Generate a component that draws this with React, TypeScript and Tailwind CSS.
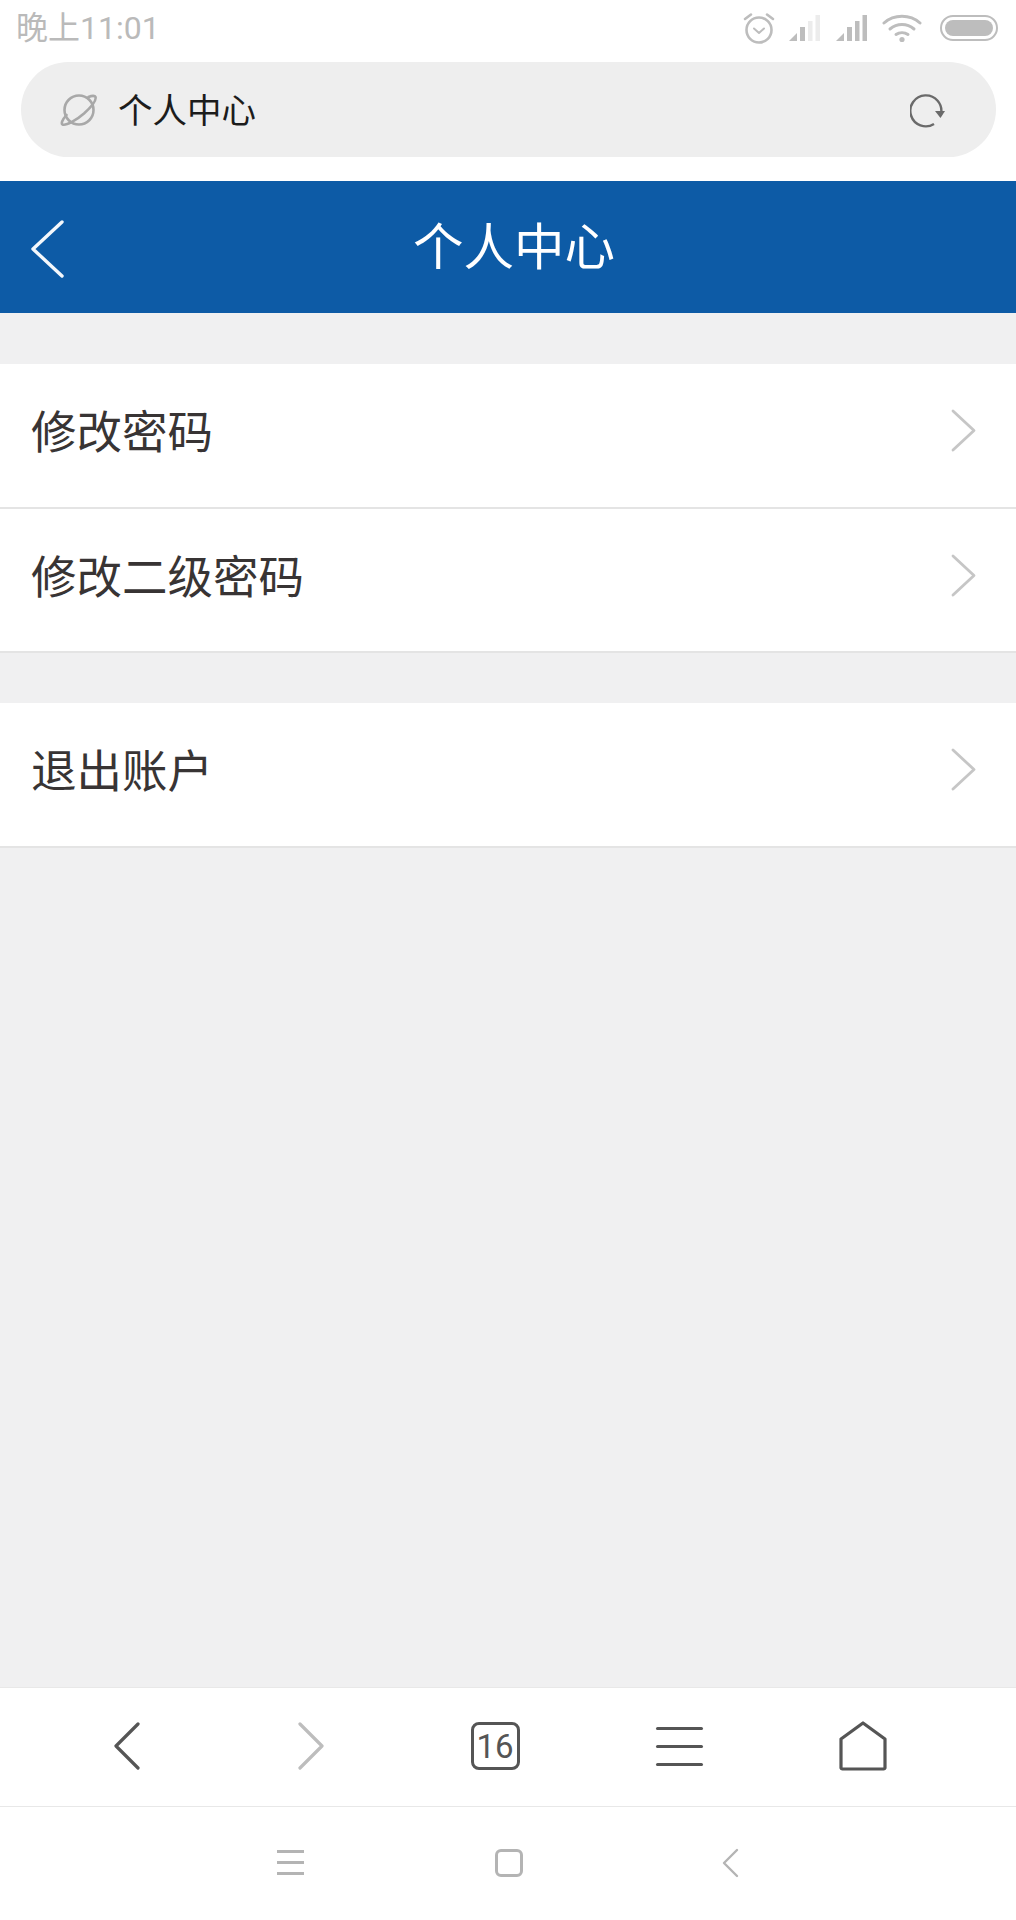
const FONT = "font-['Noto_Sans_CJK_SC','Noto_Sans',sans-serif]";

const ROWS_TOP = ["修改密码", "修改二级密码"];
const ROWS_BOTTOM = ["退出账户"];

function Signal({ weak }: { weak?: boolean }) {
  return (
    <svg width="32" height="28" viewBox="0 0 32 28" fill="#bdbdbd">
      <path d="M1 27 L9 19 V27 Z" />
      <rect x="12" y="13" width="5" height="14" />
      <rect x="20" y="7" width="4.5" height="20" fill={weak ? "#ececec" : "#bdbdbd"} />
      <rect x="27.5" y="1" width="4.5" height="26" fill={weak ? "#ececec" : "#bdbdbd"} />
    </svg>
  );
}

function StatusBar() {
  return (
    <div className="flex h-[62px] shrink-0 items-center justify-between pl-[16px] pr-[18px] pb-[6px] bg-white">
      <span className="font-['Roboto','Noto_Sans_CJK_SC',sans-serif] text-[32px] leading-none text-[#bababa]">晚上11:01</span>
      <div className="flex items-center">
        <svg width="32" height="34" viewBox="0 0 32 34" fill="none" stroke="#bdbdbd" strokeWidth="2.6" strokeLinecap="round" strokeLinejoin="round">
          <circle cx="16" cy="19" r="12.5" />
          <path d="M11 17.5 L16 22 L21 17.5" strokeWidth="2" />
          <path d="M2 8 L8 3.5" />
          <path d="M24 3.5 L30 8" />
        </svg>
        <div className="ml-[13px]">
          <Signal weak />
        </div>
        <div className="ml-[15px]">
          <Signal />
        </div>
        <svg className="ml-[15px]" width="40" height="30" viewBox="0 0 40 30" fill="none" stroke="#bdbdbd" strokeWidth="3" strokeLinecap="round">
          <path d="M2 10 C12 1 28 1 38 10" />
          <path d="M8 16 C15 10 25 10 32 16" />
          <path d="M14 21.5 C17.5 19 22.5 19 26 21.5" />
          <circle cx="20" cy="26.5" r="2.6" fill="#bdbdbd" stroke="none" />
        </svg>
        <div className="ml-[18px] flex h-[26px] w-[58px] items-center rounded-full border-[2.5px] border-[#bdbdbd] p-[3px]">
          <div className="h-full w-full rounded-full bg-[#bdbdbd]" />
        </div>
      </div>
    </div>
  );
}

function UrlBar() {
  return (
    <div className="h-[119px] shrink-0 bg-white pl-[21px] pr-[20px]">
      <div className="flex h-[95px] items-center rounded-[48px] bg-[#eeeeee] pl-[39px] pr-[50px]">
        <svg width="38" height="36" viewBox="0 0 38 36" fill="none" stroke="#a8a8a8" strokeWidth="2.6" strokeLinecap="round">
          <circle cx="19" cy="18" r="14.5" />
          <path d="M6.5 23 C2 28 1 31.5 2.5 32.5 C6 34 16 28.5 24 21.5 C31 15 36.5 8 35.5 5 C35 3.5 32 3.5 28.5 5" />
        </svg>
        <span className={`${FONT} ml-[20px] mb-[2px] text-[34.5px] leading-none text-[#1c1c1c]`}>个人中心</span>
        <svg className="ml-auto" width="36" height="36" viewBox="0 0 36 36" fill="none">
          <path d="M31 22 A15.5 15.5 0 1 0 24 32" stroke="#6a6a6a" strokeWidth="2.4" />
          <path d="M25 19 H35 L30.5 26 Z" fill="#6a6a6a" />
        </svg>
      </div>
    </div>
  );
}

function TitleBar() {
  return (
    <div className="flex h-[132px] shrink-0 items-center bg-[#0d5ba6] pl-[31px]">
      <svg className="mt-[4px]" width="33" height="58" viewBox="0 0 33 58" fill="none" stroke="#f4f8fc" strokeWidth="3.4" strokeLinecap="round" strokeLinejoin="round">
        <path d="M31 2 L2 29 L31 56" />
      </svg>
      <h1 className={`${FONT} ml-[349px] mb-[8px] text-[50.5px] leading-none font-normal text-white`}>个人中心</h1>
    </div>
  );
}

function Row({ label }: { label: string }) {
  return (
    <div className="flex h-[144.5px] shrink-0 items-center justify-between border-b-2 border-[#e4e4e4] bg-white pb-[9px] pl-[31px] pr-[40px]">
      <span className={`${FONT} mb-[2px] text-[45.5px] leading-none text-[#383434]`}>{label}</span>
      <svg width="25" height="43" viewBox="0 0 25 43" fill="none" stroke="#c6c6c6" strokeWidth="2.8" strokeLinecap="round" strokeLinejoin="round">
        <path d="M2 2 L23 21.5 L2 41" />
      </svg>
    </div>
  );
}

function BrowserNav() {
  const box = "flex w-[184px] items-center justify-center";
  return (
    <div className="flex h-[120px] shrink-0 items-center border-y border-[#e8e8e8] bg-white pb-[2px] pl-[35px]">
      <div className={box}>
        <svg width="26" height="48" viewBox="0 0 26 48" fill="none" stroke="#555555" strokeWidth="3.2" strokeLinecap="round" strokeLinejoin="round">
          <path d="M24 2 L2 24 L24 46" />
        </svg>
      </div>
      <div className={box}>
        <svg width="26" height="48" viewBox="0 0 26 48" fill="none" stroke="#bdbdbd" strokeWidth="3.2" strokeLinecap="round" strokeLinejoin="round">
          <path d="M2 2 L24 24 L2 46" />
        </svg>
      </div>
      <div className={box}>
        <div className="flex h-[48px] w-[49px] items-center justify-center rounded-[8px] border-[3px] border-[#555555]">
          <span className="font-['Roboto',sans-serif] text-[33px] leading-none text-[#555555]">16</span>
        </div>
      </div>
      <div className={box}>
        <div className="flex w-[47px] flex-col gap-[15px]">
          <div className="h-[3px] rounded-full bg-[#555555]" />
          <div className="h-[3px] rounded-full bg-[#555555]" />
          <div className="h-[3px] rounded-full bg-[#555555]" />
        </div>
      </div>
      <div className={box}>
        <svg width="48" height="50" viewBox="0 0 48 50" fill="none" stroke="#555555" strokeWidth="3.2" strokeLinejoin="round">
          <path d="M24 2 L46 18 V47 A1.5 1.5 0 0 1 44.5 48 H3.5 A1.5 1.5 0 0 1 2 47 V18 Z" />
        </svg>
      </div>
    </div>
  );
}

function SystemNav() {
  return (
    <div className="flex h-[113px] shrink-0 items-center bg-white pb-[2px] pl-[277px]">
      <div className="flex w-[27px] flex-col gap-[8px]">
        <div className="h-[3px] bg-[#b4b4b4]" />
        <div className="h-[3px] bg-[#b4b4b4]" />
        <div className="h-[3px] bg-[#b4b4b4]" />
      </div>
      <div className="ml-[191px] h-[28px] w-[28px] rounded-[6px] border-[3px] border-[#b4b4b4]" />
      <svg className="ml-[199px]" width="17" height="30" viewBox="0 0 17 30" fill="none" stroke="#b4b4b4" strokeWidth="2.4" strokeLinecap="round" strokeLinejoin="round">
        <path d="M15 2 L2 15 L15 28" />
      </svg>
    </div>
  );
}

export default function App() {
  return (
    <div className="flex h-[1920px] w-[1016px] flex-col overflow-hidden bg-[#f0f0f1]">
      <StatusBar />
      <UrlBar />
      <TitleBar />
      <main className="flex flex-1 flex-col pt-[51px]">
        {ROWS_TOP.map((label) => (
          <Row key={label} label={label} />
        ))}
        <div className="h-[50px] shrink-0" />
        {ROWS_BOTTOM.map((label) => (
          <Row key={label} label={label} />
        ))}
      </main>
      <BrowserNav />
      <SystemNav />
    </div>
  );
}
